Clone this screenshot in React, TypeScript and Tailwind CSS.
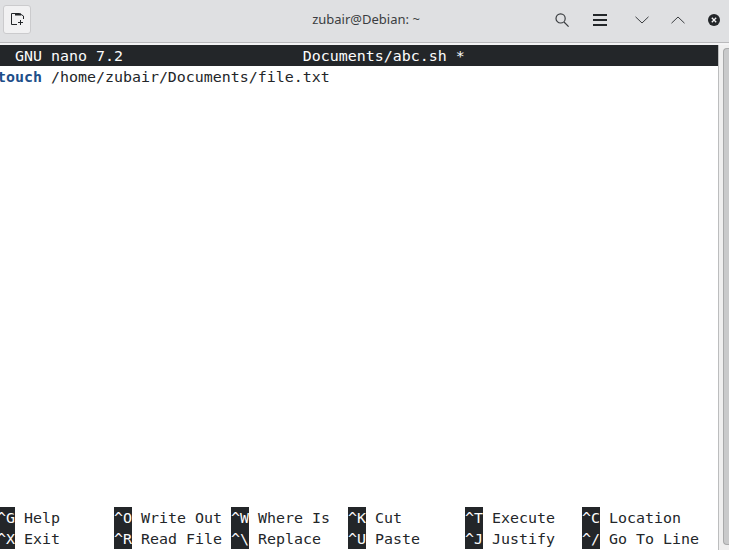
const shortcuts = [
  [
    ["^G", "Help"],
    ["^O", "Write Out"],
    ["^W", "Where Is"],
    ["^K", "Cut"],
    ["^T", "Execute"],
    ["^C", "Location"],
  ],
  [
    ["^X", "Exit"],
    ["^R", "Read File"],
    ["^\\", "Replace"],
    ["^U", "Paste"],
    ["^J", "Justify"],
    ["^/", "Go To Line"],
  ],
]

const IconSlot = ({ children, className = "" }: { children: React.ReactNode; className?: string }) => (
  <div className={`flex h-[29px] w-[30px] items-center justify-center ${className}`}>{children}</div>
)

const HeaderBar = () => (
  <div className="flex h-[45px] shrink-0 items-start border-b-2 border-b-[#f4f4f5] bg-[#dfe0e2] pl-[3px] pt-[5px] shadow-[inset_0_-1px_0_#b9b9bb]">
    <div className="flex-1">
      <button className="flex h-[29px] w-[28px] items-center justify-center rounded-[3px] border border-[#cbcbcd] bg-[#f1f1f2]">
        <svg width="13" height="13" viewBox="0 0 13 13" fill="none" stroke="#232629" strokeWidth="1">
          <path d="M6 11.5H.5V.5h8l4 2.5V6" />
          <path d="M4 1.5h6" strokeWidth="2" />
          <path d="M9.5 7v5M7 9.5h5" />
        </svg>
      </button>
    </div>
    <div className="h-[29px] font-['Noto_Sans',sans-serif] text-[13px] leading-[29px] text-[#3a3d40]">
      zubair@Debian: ~
    </div>
    <div className="flex flex-1 items-center justify-end gap-[6px]">
      <IconSlot className="mr-[2px]">
        <svg width="14" height="14" viewBox="0 0 14 14" fill="none" stroke="#3a3d40" strokeWidth="1.2">
          <circle cx="5.6" cy="5.4" r="4.6" />
          <path d="M9 9l4.6 4.6" />
        </svg>
      </IconSlot>
      <IconSlot className="mr-[6px]">
        <svg width="14" height="12" viewBox="0 0 14 12" fill="#232629">
          <rect x="0" y="0" width="14" height="2" />
          <rect x="0" y="5" width="14" height="2" />
          <rect x="0" y="10" width="14" height="2" />
        </svg>
      </IconSlot>
      <IconSlot>
        <svg width="14" height="8" viewBox="0 0 14 8" fill="none" stroke="#3a3d40" strokeWidth="1">
          <path d="M.5.8L7 7l6.5-6.2" />
        </svg>
      </IconSlot>
      <IconSlot>
        <svg width="14" height="8" viewBox="0 0 14 8" fill="none" stroke="#3a3d40" strokeWidth="1">
          <path d="M.5 7.2L7 1l6.5 6.2" />
        </svg>
      </IconSlot>
      <IconSlot>
        <svg width="12" height="12" viewBox="0 0 12 12">
          <circle cx="6" cy="6" r="6" fill="#232629" />
          <path d="M3.8 3.8l4.4 4.4M8.2 3.8L3.8 8.2" stroke="#f4f4f5" strokeWidth="1.3" />
        </svg>
      </IconSlot>
    </div>
  </div>
)

const Nano = () => (
  <div className="flex w-[718px] flex-col overflow-hidden whitespace-pre bg-white font-['DejaVu_Sans_Mono',monospace] text-[14.95px] leading-[21px] text-[#232629]">
    <div className="-ml-[3px] h-[21px] w-[721px] bg-[#232629] pt-[1px] text-[#fcfcfc]">
      {"  GNU nano 7.2                    Documents/abc.sh *"}
    </div>
    <div className="-ml-[3px] h-[21px] pt-[1px]">
      <span className="font-bold text-[#1d4e89]">touch</span> /home/zubair/Documents/file.txt
    </div>
    <div className="flex-1" />
    <div className="mb-[1px] -ml-[3px]">
      {shortcuts.map((row, i) => (
        <div className="flex h-[21px]" key={i}>
          {row.map(([key, label]) => (
            <div className="flex h-[21px] w-[117px] shrink-0" key={key}>
              <span className="h-[21px] bg-[#232629] pt-[1px] text-[#fcfcfc]">{key}</span>
              <span className="pl-[9px] pt-[1px]">{label}</span>
            </div>
          ))}
        </div>
      ))}
    </div>
  </div>
)

const Scrollbar = () => (
  <div className="flex flex-1 border-l border-l-[#bcbdbe] bg-[#efefef] pb-[5px] pl-[4px] pt-[3px]">
    <div className="flex-1 rounded-tl-[4px] rounded-bl-[4px] border-l border-t border-b border-[#a9aaab] bg-[#c9cacb]" />
  </div>
)

export default function App() {
  return (
    <div className="flex h-[550px] w-[729px] flex-col overflow-hidden bg-white">
      <HeaderBar />
      <div className="flex min-h-0 flex-1">
        <Nano />
        <Scrollbar />
      </div>
    </div>
  )
}
